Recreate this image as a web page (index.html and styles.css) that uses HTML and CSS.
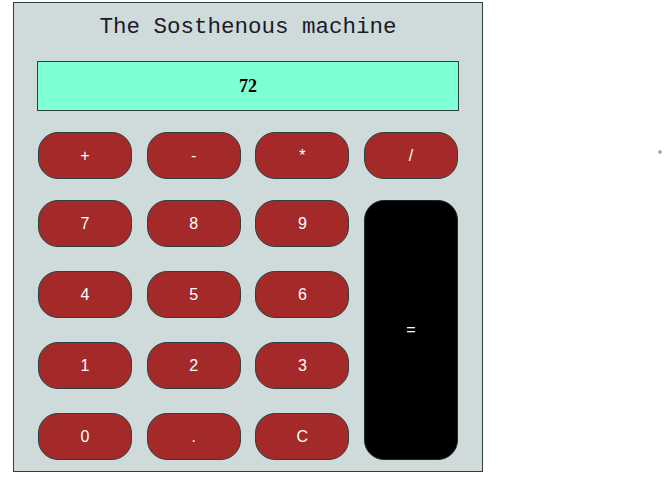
FILE: index.html
```html
<!DOCTYPE html>
<html>
<head>
<meta charset="utf-8">
<link rel="stylesheet" href="styles.css">
</head>
<body>
<div class="calc">
  <h1 class="title">The Sosthenous machine</h1>
  <div class="display">72</div>
  <div class="ops">
    <button class="key">+</button>
    <button class="key">-</button>
    <button class="key">*</button>
    <button class="key">/</button>
  </div>
  <div class="pad">
    <button class="key">7</button>
    <button class="key">8</button>
    <button class="key">9</button>
    <button class="key equals">=</button>
    <button class="key">4</button>
    <button class="key">5</button>
    <button class="key">6</button>
    <button class="key">1</button>
    <button class="key">2</button>
    <button class="key">3</button>
    <button class="key">0</button>
    <button class="key">.</button>
    <button class="key">C</button>
  </div>
</div>
<span class="dot"></span>
</body>
</html>
```
FILE: styles.css
```css
html, body {
  margin: 0;
  padding: 0;
  background: #ffffff;
}
body {
  position: relative;
  width: 664px;
  height: 481px;
}
.calc {
  box-sizing: border-box;
  width: 470px;
  margin: 2px 0 0 13px;
  padding: 12px 23px 11px 23px;
  background: #cfdbdb;
  border: 1px solid #2f3f3f;
}
.title {
  margin: 0 0 21px 0;
  font-family: "Liberation Mono", "Courier New", monospace;
  font-weight: normal;
  font-size: 22.5px;
  line-height: 25px;
  text-align: center;
  color: #1a1a2a;
}
.display {
  box-sizing: border-box;
  height: 50px;
  background: #7fffd4;
  border: 1px solid #2f3f3f;
  display: flex;
  align-items: center;
  justify-content: center;
  font-family: "Liberation Serif", "Times New Roman", serif;
  font-weight: bold;
  font-size: 18px;
  color: #000;
  margin-bottom: 21px;
}
.ops, .pad {
  display: grid;
  grid-template-columns: repeat(4, 1fr);
  column-gap: 14.67px;
  padding: 0 1px;
}
.ops {
  grid-template-rows: 47px;
  margin-bottom: 21px;
}
.pad {
  grid-template-rows: repeat(4, 47px);
  row-gap: 24px;
}
.key {
  box-sizing: border-box;
  margin: 0;
  padding: 0;
  background: #a42a2a;
  border: 1px solid #2f4040;
  border-radius: 20px;
  color: #ffffff;
  font-family: "Liberation Sans", Arial, sans-serif;
  font-size: 16px;
}
.equals {
  grid-column: 4;
  grid-row: 1 / span 4;
  background: #000000;
  border-color: #1a2a2a;
}
.dot {
  position: absolute;
  left: 658px;
  top: 150px;
  width: 4px;
  height: 4px;
  border-radius: 50%;
  background: #b0b0b0;
}
```
